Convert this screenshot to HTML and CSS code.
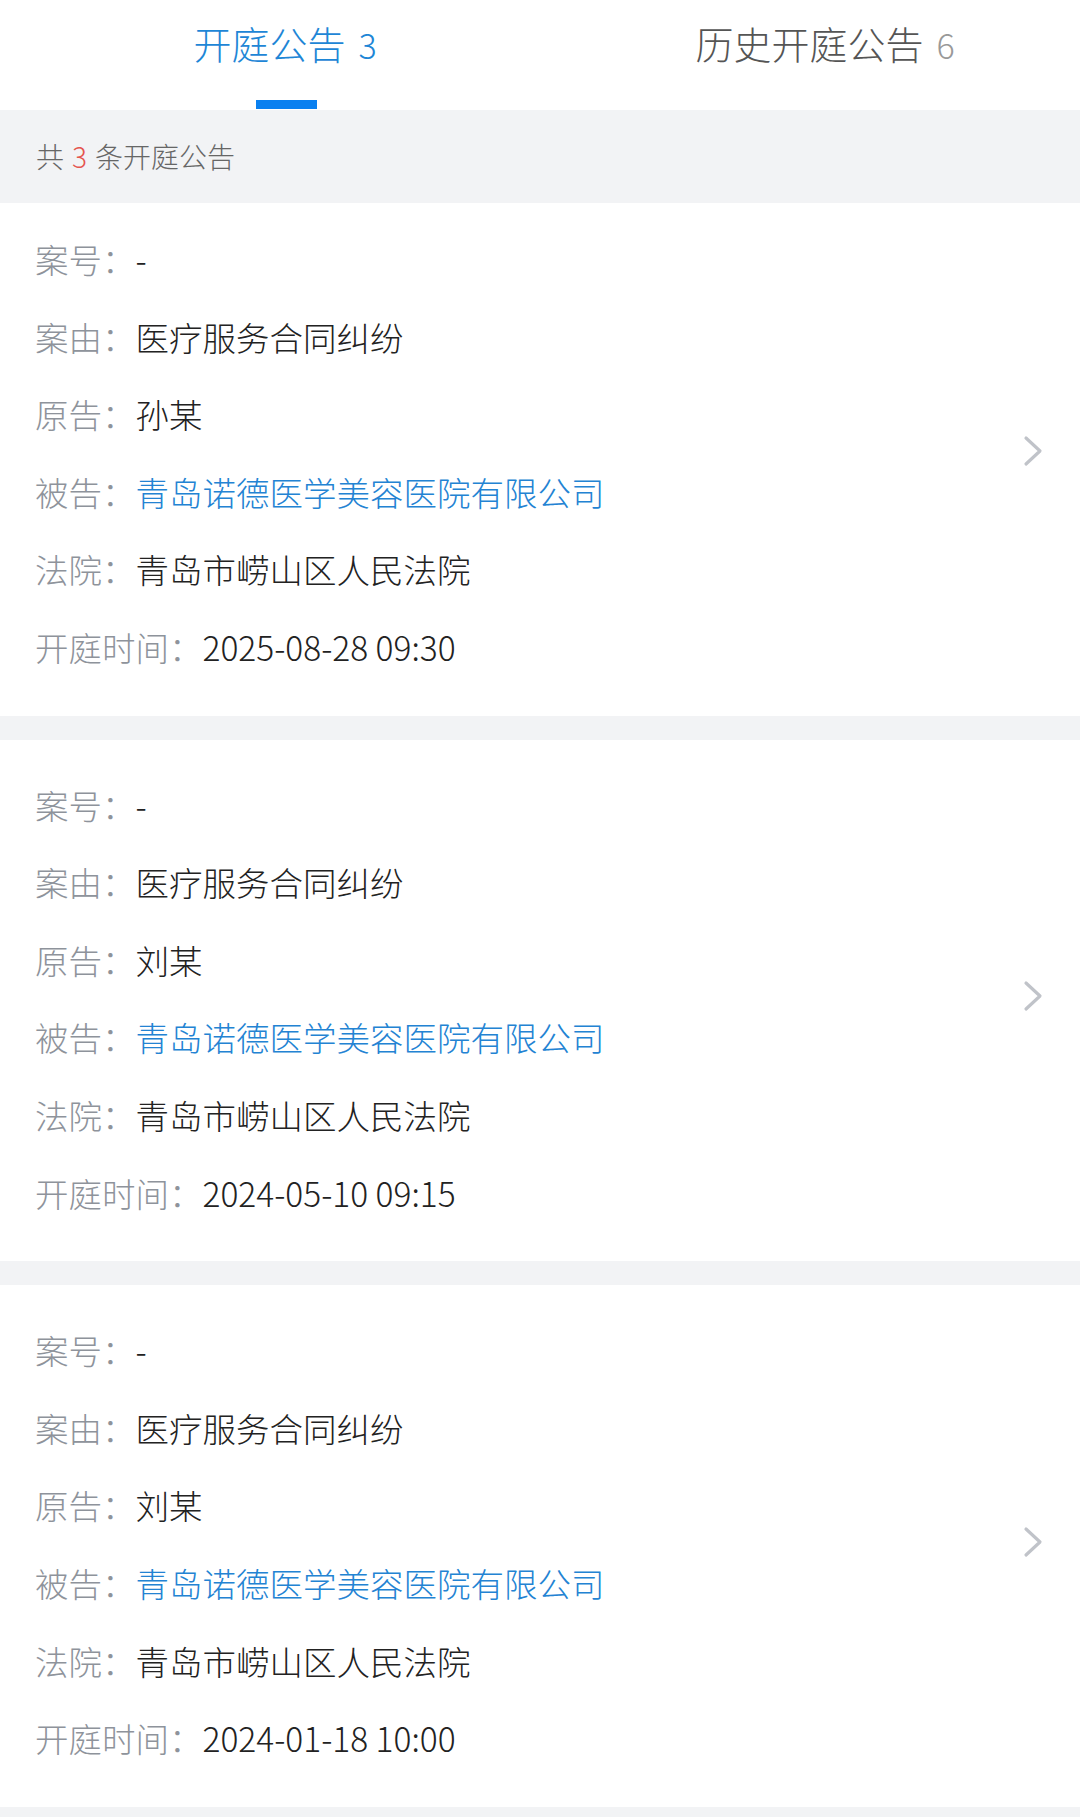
FILE: index.html
```html
<!DOCTYPE html>
<html lang="zh-CN">
<head>
  <meta charset="UTF-8">
  <meta name="viewport" content="width=device-width, initial-scale=1.0">
  <title>开庭公告</title>
  <link rel="stylesheet" href="styles.css">
</head>
<body>
  <!-- 顶部tab -->
  <div class="tabs">
    <div class="tab active">开庭公告<span class="num">3</span></div>
    <div class="tab">历史开庭公告<span class="num">6</span></div>
  </div>

  <div class="total">共<span class="red">3</span>条开庭公告</div>

  <div class="card card-first">
    <div class="info">
      <div class="row"><span class="label">案号：</span><span class="val">-</span></div>
      <div class="row"><span class="label">案由：</span><span class="val">医疗服务合同纠纷</span></div>
      <div class="row"><span class="label">原告：</span><span class="val">孙某</span></div>
      <div class="row"><span class="label">被告：</span><span class="val link">青岛诺德医学美容医院有限公司</span></div>
      <div class="row"><span class="label">法院：</span><span class="val">青岛市崂山区人民法院</span></div>
      <div class="row"><span class="label">开庭时间：</span><span class="val">2025-08-28 09:30</span></div>
    </div>
    <svg class="arrow" width="20" height="32" viewBox="0 0 20 32"><polyline points="3,3 17,16 3,29" fill="none" stroke="#c0c3c9" stroke-width="3.2" stroke-linecap="round" stroke-linejoin="round"/></svg>
  </div>

  <div class="card">
    <div class="info">
      <div class="row"><span class="label">案号：</span><span class="val">-</span></div>
      <div class="row"><span class="label">案由：</span><span class="val">医疗服务合同纠纷</span></div>
      <div class="row"><span class="label">原告：</span><span class="val">刘某</span></div>
      <div class="row"><span class="label">被告：</span><span class="val link">青岛诺德医学美容医院有限公司</span></div>
      <div class="row"><span class="label">法院：</span><span class="val">青岛市崂山区人民法院</span></div>
      <div class="row"><span class="label">开庭时间：</span><span class="val">2024-05-10 09:15</span></div>
    </div>
    <svg class="arrow" width="20" height="32" viewBox="0 0 20 32"><polyline points="3,3 17,16 3,29" fill="none" stroke="#c0c3c9" stroke-width="3.2" stroke-linecap="round" stroke-linejoin="round"/></svg>
  </div>

  <div class="card card-last">
    <div class="info">
      <div class="row"><span class="label">案号：</span><span class="val">-</span></div>
      <div class="row"><span class="label">案由：</span><span class="val">医疗服务合同纠纷</span></div>
      <div class="row"><span class="label">原告：</span><span class="val">刘某</span></div>
      <div class="row"><span class="label">被告：</span><span class="val link">青岛诺德医学美容医院有限公司</span></div>
      <div class="row"><span class="label">法院：</span><span class="val">青岛市崂山区人民法院</span></div>
      <div class="row"><span class="label">开庭时间：</span><span class="val">2024-01-18 10:00</span></div>
    </div>
    <svg class="arrow" width="20" height="32" viewBox="0 0 20 32"><polyline points="3,3 17,16 3,29" fill="none" stroke="#c0c3c9" stroke-width="3.2" stroke-linecap="round" stroke-linejoin="round"/></svg>
  </div>
</body>
</html>
```

FILE: styles.css
```css
body{
  margin: 0;
  background: #f2f3f5;
  font-family: "Noto Sans CJK SC", "Noto Sans", sans-serif;
  font-weight: 300;
}
.tabs{
  display: flex;
  height: 110px;
  background: #fff;
}
.tab{
  flex: 1;
  position: relative;
  text-align: center;
  padding: 19px 0 0 30px;
  font-size: 38px;
  line-height: 48px;
  color: #555;
}
.tab .num{
  margin-left: 13px;
  font-size: 34px;
  color: #999;
}
.tab.active,
.tab.active .num{
  color: #1e86d6;
}
/* 选中下划线 */
.tab.active::after{
  content: '';
  position: absolute;
  left: 50%;
  bottom: 1px;
  width: 61px;
  height: 9px;
  margin-left: -14px;
  background: #0a80f0;
}
.total{
  height: 93px;
  line-height: 92px;
  padding-left: 36px;
  font-size: 28px;
  color: #666;
}
.total .red{
  color: #e5554f;
  margin: 0 8px;
}
.card{
  display: flex;
  align-items: center;
  background: #fff;
  padding: 26px 37px 30px 35px;
  margin-bottom: 24px;
}
/* 第一张卡片上边距小一点 */
.card-first{
  padding-top: 17px;
}
.card-last{
  margin-bottom: 10px;
}
.info{
  flex: 1;
}
.row{
  height: 77.6px;
  line-height: 77.6px;
  font-size: 33.5px;
  white-space: nowrap;
}
.label{
  color: #8e939b;
}
.val{
  color: #222;
}
.val.link{
  color: #2383d3;
}
.arrow{
  margin-top: -4px;
}
```
